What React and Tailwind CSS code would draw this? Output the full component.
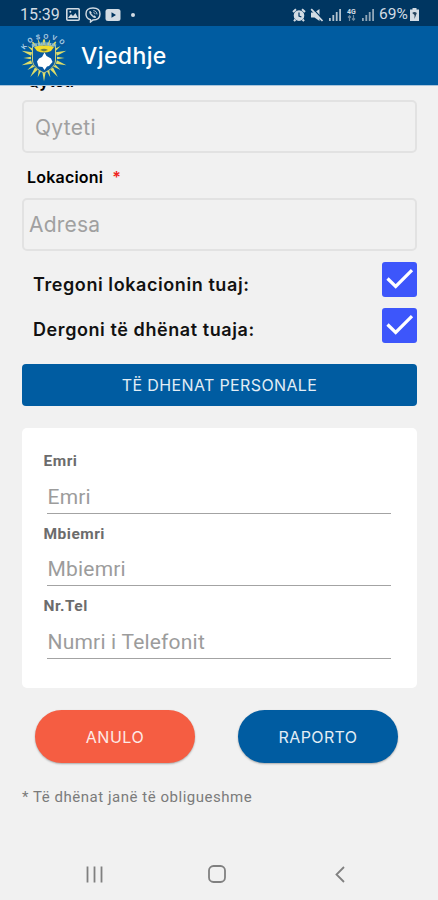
import { useState } from 'react'

const FONT = 'font-[Inter,"Open_Sans",sans-serif]'

const rays = Array.from({ length: 20 }, (_, i) => i * 18)

function Badge() {
  return (
    <svg width="52" height="52" viewBox="0 0 52 52">
      {rays.map((deg, i) => (
        <path
          key={deg}
          d={i % 2 ? 'M24.7 15 L26 7.5 L27.3 15 Z' : 'M24.2 15 L26 4.5 L27.8 15 Z'}
          fill="#dfdd68"
          transform={`rotate(${deg} 26 28)`}
        />
      ))}
      <path d="M14.5 15 C19 17 22 17 26 14.5 C30 17 33 17 37.5 15 V30 C37.5 36 32 40 26 43 C20 40 14.5 36 14.5 30 Z" fill="#0a5aa0" stroke="#cdd07a" strokeWidth="1" />
      <path d="M16 17 Q26 14 36 17 L33 21 Q26 24 19 21 Z" fill="#f3dc2c" />
      <path d="M22 20 Q26 17.5 30 20 L26 21.5 Z" fill="#6d7f48" />
      <path d="M26.5 22.5 L28.5 26 L33 28.5 L34.5 32 L31 36 L29 36.5 L26.5 40 L24.5 37 L20.5 36.5 L19 31.5 L21 28.5 L24 27 Z" fill="#fff" />
      <path id="badge-arc" d="M7 20 A 20.5 14.5 0 0 1 47 20" fill="none" />
      <path d="M7 16 A 21 14 0 0 1 46 16" fill="none" stroke="#075699" strokeWidth="4" />
      <text fill="#a9cde4" className="font-[Inter,sans-serif] text-[6.5px] font-bold" letterSpacing="3">
        <textPath href="#badge-arc">KOSOVO</textPath>
      </text>
      <path d="M14 16 Q26 11.5 38 16" fill="none" stroke="#8fbccb" strokeWidth="3" strokeDasharray="2.2 0.7" />
    </svg>
  )
}

function Signal({ dim }) {
  return (
    <svg width="12" height="13" viewBox="0 0 12 13" fill={dim ? '#8fa6b8' : '#b4c3cf'}>
      <rect x="0" y="10" width="1.8" height="3" />
      <rect x="3.4" y="7" width="1.8" height="6" />
      <rect x="6.8" y="4" width="1.8" height="9" />
      <rect x="10.2" y="1" width="1.8" height="12" />
    </svg>
  )
}

function StatusBar() {
  return (
    <div className="flex h-[26px] shrink-0 items-center justify-between bg-[#003661] pt-[3px] pr-[19px] pl-[20px] font-[Roboto,sans-serif] text-[#d3dce4]">
      <div className="flex items-center">
        <span className="w-[46px] text-[16px] leading-none">15:39</span>
        <svg width="14" height="13" viewBox="0 0 14 13">
          <rect x="0.8" y="0.8" width="12.4" height="11.4" rx="1" fill="none" stroke="#d3dce4" strokeWidth="1.6" />
          <path d="M2 10 L5 6 L7 8 L9.5 5 L12 10 Z" fill="#d3dce4" />
          <circle cx="4.3" cy="3.8" r="1" fill="#d3dce4" />
        </svg>
        <svg className="ml-[5px]" width="16" height="16" viewBox="0 0 16 16" fill="none" stroke="#d3dce4" strokeWidth="1.4">
          <path d="M8 1 C13 1 15 3 15 7 C15 11.3 13 13 8 13 L5.5 15 V12.6 C2.2 11.8 1 10.2 1 7 C1 3 3 1 8 1 Z" />
          <path d="M5 4 C4 5 5 7 6.4 8.6 C8 10.2 9.8 11.4 11 10.2 L9.5 8.8 L8.5 9.2 L6 6.5 L6.3 5.5 Z" fill="#d3dce4" strokeWidth="0.6" />
          <path d="M8.3 3.6 C10.6 3.8 11.8 5 12 7.4 M8.5 5.6 C9.6 5.8 10 6.4 10.1 7.2" strokeWidth="0.9" />
        </svg>
        <svg className="ml-[4px]" width="16" height="12" viewBox="0 0 16 12">
          <rect x="0.5" width="15" height="12" rx="2.5" fill="#d3dce4" />
          <path d="M6.5 3.3 L11 6 L6.5 8.7 Z" fill="#003661" />
        </svg>
        <span className="ml-[10px] size-[4px] rounded-full bg-[#d3dce4]" />
      </div>
      <div className="flex items-center">
        <svg width="14" height="14" viewBox="0 0 14 14">
          <circle cx="7" cy="7.6" r="4.6" fill="#d3dce4" stroke="#d3dce4" strokeWidth="1.4" />
          <path d="M1 4 L4 1.2 M13 4 L10 1.2 M3.4 11.5 L2 13.2 M10.6 11.5 L12 13.2" stroke="#d3dce4" strokeWidth="2" />
          <path d="M7 4.6 V8 L9.4 9" fill="none" stroke="#003661" strokeWidth="1.2" />
        </svg>
        <svg className="ml-[4px]" width="14" height="14" viewBox="0 0 14 14">
          <path d="M1 4.5 H4.5 L9.5 1 V13 L4.5 9.5 H1 Z" fill="#d3dce4" />
          <path d="M2.6 0.5 L13 11.5" stroke="#003661" strokeWidth="1.2" />
          <path d="M1.2 1.2 L12.5 13" stroke="#d3dce4" strokeWidth="1.8" />
        </svg>
        <span className="ml-[5px]"><Signal /></span>
        <span className="ml-[5px] flex w-[11px] flex-col items-center text-[7px] leading-[6px] font-bold">
          4G
          <svg width="9" height="6" viewBox="0 0 9 6" fill="none" stroke="#6f8ba1" strokeWidth="1.2">
            <path d="M2.5 6 V0.8 M1 2.5 L2.5 0.8 L4 2.5 M6.5 0 V5.2 M5 3.5 L6.5 5.2 L8 3.5" />
          </svg>
        </span>
        <span className="ml-[5px]"><Signal dim /></span>
        <span className="ml-[5px] w-[31px] text-[15.5px] leading-none tracking-[0.1px]">69%</span>
        <svg width="9" height="13" viewBox="0 0 9 13">
          <path d="M2.5 0 H6.5 V1.5 H9 V13 H0 V1.5 H2.5 Z" fill="#d3dce4" />
          <path d="M2.2 5 Q4.5 3.2 6.8 5 L4.5 11 L4.5 7 Z" fill="#26445e" />
        </svg>
      </div>
    </div>
  )
}

function CheckRow({ label, checked, onChange }) {
  return (
    <label className="flex h-[35px] items-center justify-between pl-[11px]">
      <span className="pt-[10px] text-[18px] leading-[26px] font-semibold tracking-[0.58px] text-[#111]">{label}</span>
      <input type="checkbox" className="sr-only" checked={checked} onChange={onChange} />
      <span className="flex size-[35px] items-center justify-center rounded-[3px] bg-[#3d56fb]">
        {checked && (
          <svg width="35" height="35" viewBox="0 0 35 35" fill="none" stroke="#fff" strokeWidth="3.2">
            <path d="M5.5 16.5 L13.7 24.4 L30 8.2" />
          </svg>
        )}
      </span>
    </label>
  )
}

function Field({ label, placeholder }) {
  return (
    <div className="flex h-[72.5px] flex-col font-[Roboto,sans-serif]">
      <span className="h-[20px] pl-[0.5px] text-[15.5px] leading-[20px] font-bold tracking-[0.5px] text-[#6c6c6c]">{label}</span>
      <input
        className="mt-[6px] mr-[5px] ml-[4px] h-[36.5px] border-b-[1.5px] border-[#a3a3a3] bg-transparent pt-[4px] pl-[0.5px] text-[21px] tracking-[0.2px] outline-none placeholder:text-[#9c9c9c]"
        placeholder={placeholder}
      />
    </div>
  )
}

export default function App() {
  const [location, setLocation] = useState(true)
  const [data, setData] = useState(true)

  return (
    <div className={`flex h-[900px] w-[438px] flex-col overflow-hidden bg-[#f1f1f1] ${FONT}`}>
      <StatusBar />
      <header className="flex h-[59px] shrink-0 items-center bg-[#005ca1] pl-[18px]">
        <Badge />
        <h1 className="ml-[11px] pt-[2px] text-[23px] leading-none font-medium tracking-[0.4px] text-white">Vjedhje</h1>
      </header>

      {/* Scrolled form */}
      <main className="flex grow flex-col overflow-hidden border-t border-[#a9c5dc] pr-[21px] pl-[22px]">
        <div className="-mt-[15px] h-[20px] shrink-0 pl-[5px] text-[16px] leading-[20px] font-semibold text-black">Qyteti</div>
        <input
          className="mt-[9px] h-[53px] shrink-0 rounded-[5px] border-2 border-[#e2e2e2] bg-transparent pt-[2px] pl-[11px] text-[21px] tracking-[0.3px] outline-none placeholder:text-[#a0a0a0]"
          placeholder="Qyteti"
        />
        <div className="mt-[14px] flex h-[20px] shrink-0 pl-[5px] text-[16px] leading-[20px] font-semibold tracking-[0.2px] text-black">
          Lokacioni
          <span className="ml-[9px] text-[#f0241d]">*</span>
        </div>
        <input
          className="mt-[11px] h-[53px] shrink-0 rounded-[5px] border-2 border-[#e2e2e2] bg-transparent pl-[5px] text-[21px] tracking-[0.2px] outline-none placeholder:text-[#a0a0a0]"
          placeholder="Adresa"
        />
        <div className="mt-[11px] flex flex-col gap-[10.5px]">
          <CheckRow label="Tregoni lokacionin tuaj:" checked={location} onChange={() => setLocation(!location)} />
          <CheckRow label="Dergoni të dhënat tuaja:" checked={data} onChange={() => setData(!data)} />
        </div>
        <button className="mt-[21.5px] h-[42px] shrink-0 rounded-[4px] bg-[#005ca1] text-[16px] tracking-[0.37px] text-[#e2edf5]">
          TË DHENAT PERSONALE
        </button>

        <section className="mt-[22px] h-[260px] shrink-0 rounded-[5px] bg-white pt-[23px] pr-[21px] pl-[21px]">
          <Field label="Emri" placeholder="Emri" />
          <Field label="Mbiemri" placeholder="Mbiemri" />
          <Field label="Nr.Tel" placeholder="Numri i Telefonit" />
        </section>

        <div className="mt-[22px] flex shrink-0 justify-between pr-[19px] pl-[13px]">
          <button className="h-[53px] w-[160px] rounded-full bg-[#f55d42] text-[16px] tracking-[0.5px] text-[#fdeae6] shadow-[0_1px_2px_rgba(0,0,0,0.3)]">
            ANULO
          </button>
          <button className="h-[53px] w-[160px] rounded-full bg-[#005ca1] text-[16px] tracking-[0.4px] text-[#e2edf5] shadow-[0_1px_2px_rgba(0,0,0,0.3)]">
            RAPORTO
          </button>
        </div>
        <p className="mt-[24px] font-[Roboto,sans-serif] text-[15px] leading-[20px] tracking-[0.53px] text-[#7b7b7b]">
          * Të dhënat janë të obligueshme
        </p>
      </main>

      {/* Navigation bar */}
      <nav className="flex h-[52px] shrink-0 items-center pl-[86px]">
        <svg width="17" height="17" viewBox="0 0 17 17" stroke="#808080" strokeWidth="1.8">
          <path d="M1.5 0.5 V16.5 M8.5 0.5 V16.5 M15.5 0.5 V16.5" />
        </svg>
        <svg className="ml-[105px]" width="18" height="18" viewBox="0 0 18 18" fill="none" stroke="#808080" strokeWidth="1.8">
          <rect x="1" y="1" width="16" height="16" rx="4.5" />
        </svg>
        <svg className="ml-[109px]" width="10" height="17" viewBox="0 0 10 17" fill="none" stroke="#808080" strokeWidth="1.8">
          <path d="M9 1 L1.5 8.5 L9 16" />
        </svg>
      </nav>
    </div>
  )
}
